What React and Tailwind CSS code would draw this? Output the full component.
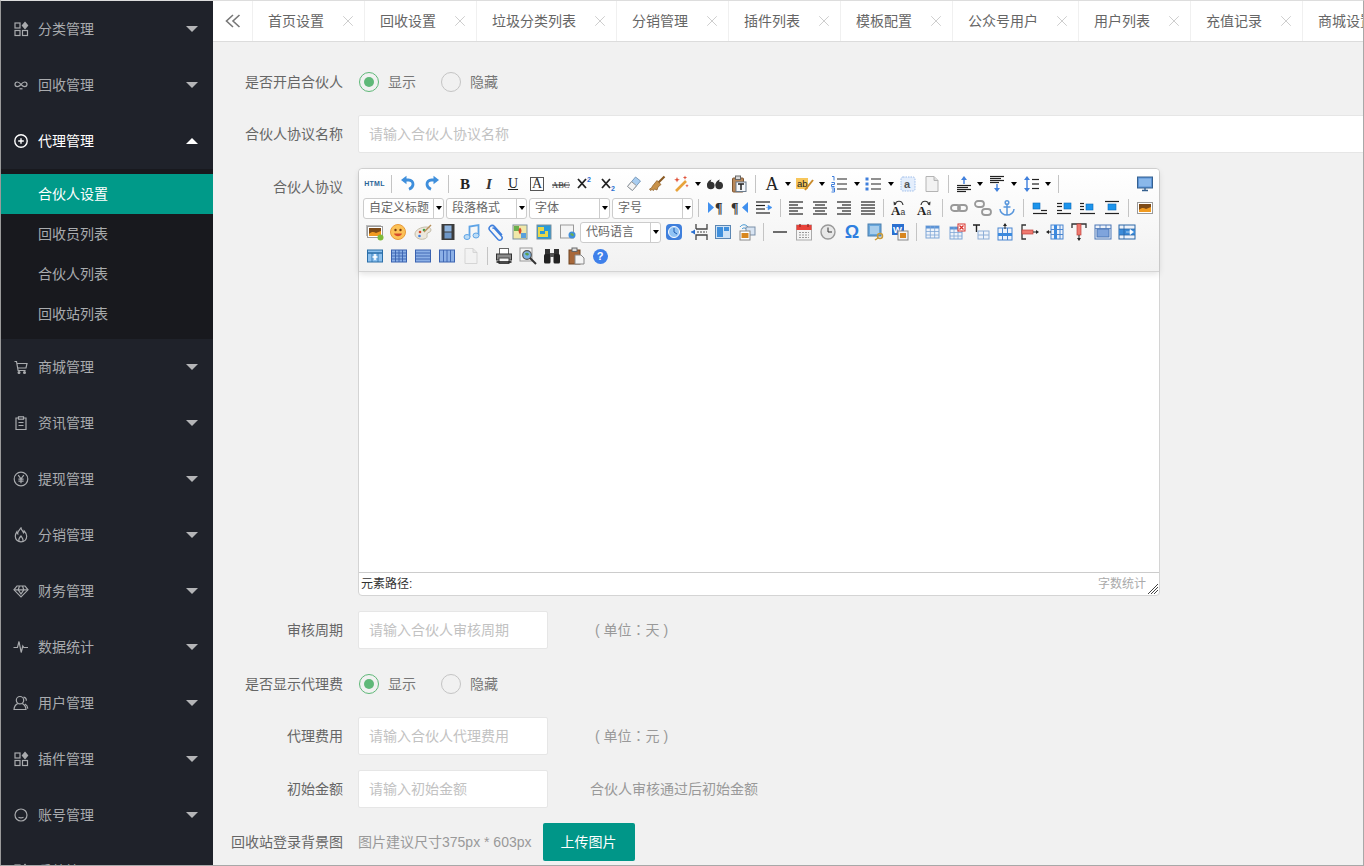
import React from 'react';
import { X } from 'lucide-react';

/* ---------- sidebar icons ---------- */
const Side = ({ children }) => (
  <svg width="16" height="16" viewBox="0 0 16 16" fill="none" stroke="currentColor" strokeWidth="1.2" className="shrink-0">
    {children}
  </svg>
);
const IcoApps = () => (
  <Side>
    <rect x="2" y="2" width="5" height="5" />
    <rect x="2" y="9.500" width="5" height="5" />
    <rect x="9.500" y="9.500" width="5" height="5" />
    <path d="M12 1.500l2.600 3-2.600 3-2.600-3z" fill="currentColor" />
  </Side>
);
const IcoLoop = () => (
  <Side>
    <path d="M8 7.500C6.500 5.500 5.500 5 4.300 5 3 5 2 6 2 7.300s1 2.300 2.300 2.300c1.200 0 2.200-.6 3.700-2.100 1.500 1.500 2.500 2.100 3.700 2.100 1.300 0 2.300-1 2.300-2.300S13 5 11.700 5C10.500 5 9.500 5.500 8 7.500z" />
    <path d="M6.500 11.800h3" />
  </Side>
);
const IcoPlus = () => (
  <Side>
    <circle cx="8" cy="8" r="6.200" strokeWidth="1.400" />
    <path d="M8 5.200v5.600M5.200 8h5.600" strokeWidth="1.400" />
  </Side>
);
const IcoCart = () => (
  <Side>
    <path d="M1.500 2.500h2l1.600 9h7.500" />
    <path d="M4 4.500h10l-1 4.500H5" />
    <circle cx="6" cy="13.500" r=".9" fill="currentColor" />
    <circle cx="11.500" cy="13.500" r=".9" fill="currentColor" />
  </Side>
);
const IcoClip = () => (
  <Side>
    <path d="M5.500 3H3v11.500h10V3h-2.500" />
    <rect x="5.500" y="1.800" width="5" height="2.400" />
    <path d="M5.500 7.500h5M5.500 10.500h5" />
  </Side>
);
const IcoYen = () => (
  <Side>
    <circle cx="8" cy="8" r="6.800" />
    <path d="M5.200 4.200L8 7.800l2.800-3.600M8 7.800v4.500M5.400 8.200h5.200M5.400 10.200h5.200" />
  </Side>
);
const IcoFlame = () => (
  <Side>
    <path d="M8 .8c.6 2.700 2 3.200 2.500 5 .5-.5.700-1.200.7-1.800 1.600 1.600 2.500 3.500 2.500 5.300 0 3.300-2.500 5.500-5.700 5.500s-5.700-2.200-5.700-5.500c0-1.900.6-3.200 1.500-4.500.1 1 .4 1.600.9 2C4.500 4.500 6.200 3 8 .8z" />
    <path d="M6 14c-.8-2.200.5-3.500 2-5 1 1.500 2.500 2.800 2 5" />
  </Side>
);
const IcoGem = () => (
  <Side>
    <path d="M4 3h8l3 3.800L8 14 1 6.800z" />
    <path d="M1.500 6.800h13M5.200 6.800L8 11l2.800-4.200L9.500 3M6.500 3L5.200 6.800" />
  </Side>
);
const IcoPulse = () => (
  <Side>
    <path d="M.5 8.500h4l1.500-6 2.200 11 1.600-6.500 1 1.500h4.200" />
  </Side>
);
const IcoUser = () => (
  <Side>
    <circle cx="7" cy="5.200" r="3.700" />
    <path d="M4.800 8.500C2.800 9.500 1.200 11.500 1 14.500h12c-.2-3-1.800-5-3.800-6" />
    <path d="M10.500 2.200c2 .4 3 2 2.800 3.600M12 9c1.600.8 2.600 2.500 2.800 4.600" />
  </Side>
);
const IcoFace = () => (
  <Side>
    <circle cx="8" cy="8" r="6" />
    <path d="M5.500 10.300c1.500.8 3.500.8 5 0" />
  </Side>
);

const menu = [
  { label: '分类管理', icon: IcoApps },
  { label: '回收管理', icon: IcoLoop },
  { label: '代理管理', icon: IcoPlus, open: true, children: ['合伙人设置', '回收员列表', '合伙人列表', '回收站列表'] },
  { label: '商城管理', icon: IcoCart },
  { label: '资讯管理', icon: IcoClip },
  { label: '提现管理', icon: IcoYen },
  { label: '分销管理', icon: IcoFlame },
  { label: '财务管理', icon: IcoGem },
  { label: '数据统计', icon: IcoPulse },
  { label: '用户管理', icon: IcoUser },
  { label: '插件管理', icon: IcoApps },
  { label: '账号管理', icon: IcoFace },
  { label: '系统管理', icon: IcoApps },
];

const Sidebar = () => (
  <aside className="w-[212px] shrink-0 bg-[#1f222a] overflow-hidden text-sm text-[#a9abae]">
    {menu.map(({ label, icon: Icon, open, children }) => (
      <div key={label}>
        <div className={`h-14 flex items-center pl-[12px] pr-[15px] ${open ? 'text-white' : ''}`}>
          <span className="w-[25px]"><Icon /></span>
          <span className="flex-1">{label}</span>
          {open ? (
            <span className="border-x-[6px] border-b-[6px] border-x-transparent border-b-white" />
          ) : (
            <span className="border-x-[6px] border-t-[6px] border-x-transparent border-t-[#b4b5b7]" />
          )}
        </div>
        {children && (
          <div className="bg-[#18191e] py-[5px]">
            {children.map((c, i) => (
              <div key={c} className={`h-10 flex items-center pl-[37px] ${i === 0 ? 'bg-[#009a89] text-white' : ''}`}>
                {c}
              </div>
            ))}
          </div>
        )}
      </div>
    ))}
  </aside>
);

/* ---------- tabs ---------- */
const tabs = [
  ['首页设置', 'w-[112px]'], ['回收设置', 'w-[112px]'], ['垃圾分类列表', 'w-[140px]'], ['分销管理', 'w-[112px]'],
  ['插件列表', 'w-[112px]'], ['模板配置', 'w-[112px]'], ['公众号用户', 'w-[126px]'], ['用户列表', 'w-[112px]'],
  ['充值记录', 'w-[112px]'], ['商城设置', 'w-[112px]'],
];

const TabBar = () => (
  <div className="h-[41px] shrink-0 flex bg-white border-b border-[#dcdcdc] overflow-hidden text-sm text-[#666]">
    <div className="w-10 shrink-0 flex items-center justify-center border-r border-[#f0f0f0] pl-[1px]">
      <svg width="16" height="14" viewBox="0 0 16 14" fill="none" stroke="#777" strokeWidth="1.600">
        <path d="M8 1L1.500 7 8 13M14.500 1L8 7l6.500 6" />
      </svg>
    </div>
    {tabs.map(([t, w]) => (
      <div key={t} className={`${w} shrink-0 h-full flex items-center pl-[15px] pr-[7px] border-r border-[#f0f0f0]`}>
        <span className="flex-1 whitespace-nowrap">{t}</span>
        <X size={18} strokeWidth={1.2} className="text-[#c8c8c8]" />
      </div>
    ))}
  </div>
);

/* ---------- editor toolbar pieces ---------- */
const C = ({ w = 'w-6', children }) => (
  <div className={`${w} shrink-0 h-6 flex items-center justify-center`}>{children}</div>
);
const Sep = ({ w = 'w-[9px]' }) => (
  <div className={`${w} shrink-0 h-6 flex items-center justify-center`}>
    <div className="w-px h-[18px] bg-[#c4c4c4]" />
  </div>
);
const Tri = () => <span className="border-x-[3px] border-t-[4px] border-x-transparent border-t-black" />;
const Arrow = ({ w = 'w-2' }) => <C w={w}><Tri /></C>;
const Combo = ({ label, split = 'w-[10px]', cls = 'w-[81px]' }) => (
  <div className={`${cls} shrink-0 h-[21px] flex bg-white border border-[#ccc] rounded-[3px] text-xs text-[#666]`}>
    <div className="flex-1 pl-[5px] leading-[19px] whitespace-nowrap overflow-hidden">{label}</div>
    <div className={`${split} border-l border-[#ccc] flex items-center justify-center`}><Tri /></div>
  </div>
);

const S = ({ children }) => (
  <svg width="18" height="18" viewBox="0 0 18 18" fill="none">{children}</svg>
);
const Serif = ({ children, cls }) => (
  <span className={`font-['Liberation_Serif',serif] leading-none ${cls}`}>{children}</span>
);

const UndoPath = () => (
  <>
    <path d="M6 5h3.500c3 0 4.500 2 4.500 4.200 0 2.300-1.500 4-4 5" stroke="#3f8fdc" strokeWidth="2.800" />
    <path d="M7.500 .8v8.400L2 5z" fill="#3f8fdc" />
  </>
);
const Undo = () => <S><UndoPath /></S>;
const Redo = () => (
  <S>
    <g transform="matrix(-1 0 0 1 18 0)"><UndoPath /></g>
  </S>
);
const BoxA = () => (
  <div className="w-[14px] h-[14px] border border-[#555] flex items-center justify-center">
    <Serif cls="text-[14px] text-[#333]">A</Serif>
  </div>
);
const Abc = () => (
  <S>
    <text x="0" y="13" fontFamily="Liberation Serif" fontSize="8.500" fill="#333">ABC</text>
    <path d="M0 10h18" stroke="#222" />
  </S>
);
const XSup = ({ sub }) => (
  <S>
    <path d="M2 4l8 9M10 4l-8 9" stroke="#222" strokeWidth="1.800" />
    <text x="11" y={sub ? 16 : 7} fontFamily="Liberation Sans" fontWeight="700" fontSize="7" fill="#2a6fd0">2</text>
  </S>
);
const Eraser = () => (
  <S>
    <path d="M11.500 2l5 4-8 9.500-5-4z" fill="#a9cdf0" stroke="#7b9cbd" />
    <path d="M3.500 11.500l4-4.800 5 4-4 4.800z" fill="#f4f4f4" stroke="#9a9a9a" />
  </S>
);
const Brush = () => (
  <S>
    <path d="M10 8l6.500-6.500" stroke="#8a5a24" strokeWidth="2.200" />
    <path d="M9 5.500l4 4-3 2.500-1 3-2.500-1-1 1.500-1.500-1-1.500 1-1-1.500 2-1 1-2z" fill="#c8924a" stroke="#8a5a24" strokeWidth=".7" />
  </S>
);
const Wand = () => (
  <S>
    <path d="M4 16L14 6" stroke="#e8a33a" strokeWidth="2.600" />
    <path d="M5 2l.8 2 2 .8-2 .8L5 7.500l-.8-1.900-2-.8 2-.8zM13 .5l.6 1.500 1.500.6-1.500.6-.6 1.500-.6-1.500-1.500-.6 1.500-.6zM15 9l.5 1.200 1.200.5-1.200.5-.5 1.200-.5-1.200-1.200-.5 1.200-.5z" fill="#e0523a" />
  </S>
);
const Quote = () => (
  <S>
    <circle cx="4.800" cy="10.500" r="3.800" fill="#333" />
    <path d="M1 10.500c0-3.500 2-5.500 4.500-6-1 1.500-1 3-.5 4z" fill="#333" />
    <circle cx="13.200" cy="10.500" r="3.800" fill="#333" />
    <path d="M9.400 10.500c0-3.500 2-5.500 4.500-6-1 1.500-1 3-.5 4z" fill="#333" />
  </S>
);
const PasteT = () => (
  <S>
    <rect x="2.500" y="3" width="11" height="14" rx="1" fill="#b9885a" stroke="#7d5530" />
    <rect x="5.500" y="1" width="5" height="3.500" fill="#d8d8d8" stroke="#666" />
    <rect x="6" y="7" width="10" height="9.500" fill="#f4f7fb" stroke="#6a7b8c" />
    <path d="M8 9h6M11 9v6" stroke="#222" strokeWidth="1.500" />
  </S>
);
const BigA = () => <Serif cls="text-[18px] text-[#222]">A</Serif>;
const Hl = () => (
  <S>
    <rect x="0" y="3" width="12" height="11" fill="#f7c65a" />
    <text x="1" y="12" fontFamily="Liberation Sans" fontSize="9.500" fill="#222">ab</text>
    <path d="M9 15L17 5" stroke="#c98a2a" strokeWidth="2" />
  </S>
);
const Ol = () => (
  <S>
    <path d="M7 4h10M7 9h10M7 14h10" stroke="#222" strokeWidth="1.200" />
    <path d="M2 1.500h2v4M1.500 7.500h3v2h-3v2h3M1.500 13h3v4h-3M2 15h2" stroke="#3f7fdc" />
  </S>
);
const Ul = () => (
  <S>
    <path d="M7 4h10M7 9h10M7 14h10" stroke="#222" strokeWidth="1.200" />
    <rect x="1.500" y="2.500" width="3" height="3" fill="#3f7fdc" />
    <rect x="1.500" y="7.500" width="3" height="3" fill="#3f7fdc" />
    <rect x="1.500" y="12.500" width="3" height="3" fill="#3f7fdc" />
  </S>
);
const DashA = () => (
  <S>
    <rect x="2" y="2" width="14" height="14" rx="2" fill="#e4eefc" stroke="#9dbdea" strokeDasharray="1.500 1" />
    <text x="5" y="13" fontFamily="Liberation Sans" fontWeight="700" fontSize="11" fill="#555">a</text>
  </S>
);
const Doc = ({ op }) => (
  <S>
    <path d="M3 1.500h8l4 4v11H3z" fill="#f2f2f2" stroke="#b4b4b4" opacity={op} />
    <path d="M11 1.500v4h4" fill="#ddd" stroke="#b4b4b4" opacity={op} />
  </S>
);
const Lines = ({ rows, stroke = '#222' }) => (
  <g stroke={stroke} strokeWidth="1.200">
    {rows.map(([y, a, b]) => <path key={y} d={`M${a} ${y}H${b}`} />)}
  </g>
);
const RowTop = () => (
  <S>
    <path d="M9 1l3 4H6z M8.300 5h1.400v4H8.300z" fill="#3f7fdc" />
    <Lines rows={[[10.500, 2, 16], [12.500, 2, 13], [14.500, 2, 16], [16.500, 2, 11]]} />
  </S>
);
const RowBot = () => (
  <S>
    <Lines rows={[[1.500, 2, 16], [3.500, 2, 13], [5.500, 2, 16], [7.500, 2, 11]]} />
    <path d="M9 17l3-4H6z M8.300 9h1.400v4H8.300z" fill="#3f7fdc" />
  </S>
);
const LineH = () => (
  <S>
    <path d="M5 1l3 4H2zM5 17l3-4H2zM4.300 5h1.400v8H4.300z" fill="#3f7fdc" />
    <Lines rows={[[4.500, 10, 17], [9, 10, 17], [13.500, 10, 17]]} />
  </S>
);
const Monitor = () => (
  <S>
    <rect x="1.500" y="2" width="15" height="11" fill="#5b93d6" stroke="#35608f" />
    <rect x="3" y="3.500" width="12" height="8" fill="#8ab8ea" />
    <path d="M6 15.500h6M9 13v2.500" stroke="#35608f" strokeWidth="1.400" />
  </S>
);
const Ltr = ({ rev }) => (
  <S>
    <g transform={rev ? 'matrix(-1 0 0 1 18 0)' : undefined}>
      <path d="M1 3v11l6-5.500z" fill="#3f8fee" />
    </g>
    <text x={rev ? 0 : 8} y="14" fontFamily="Liberation Serif" fontWeight="700" fontSize="14" fill="#333">¶</text>
  </S>
);
const Indent = () => (
  <S>
    <Lines rows={[[3, 1, 15], [6.500, 1, 10], [10, 1, 10], [14, 1, 15]]} />
    <path d="M11 8.500h3M13 6l4 2.500-4 2.500z" fill="#3f8fee" stroke="#3f8fee" strokeWidth=".5" />
  </S>
);
const Align = ({ kind }) => {
  const r = {
    l: [[3, 2, 16], [6, 2, 11], [9, 2, 16], [12, 2, 11], [15, 2, 16]],
    c: [[3, 2, 16], [6, 4, 14], [9, 2, 16], [12, 4, 14], [15, 2, 16]],
    r: [[3, 2, 16], [6, 7, 16], [9, 2, 16], [12, 7, 16], [15, 2, 16]],
    j: [[3, 2, 16], [6, 2, 16], [9, 2, 16], [12, 2, 16], [15, 2, 16]],
  }[kind];
  return <S><Lines rows={r} /></S>;
};
const AaCase = ({ flip }) => (
  <S>
    <text x="1" y="16" fontFamily="Liberation Serif" fontWeight="700" fontSize="13" fill="#222">A</text>
    <text x="10.500" y="15.500" fontFamily="Liberation Sans" fontSize="8.500" fill="#333">a</text>
    <path d="M5 6c1-5 7-5 8 0" stroke="#333" strokeWidth="1.200" />
    <path d={flip ? 'M14.500 2.500l-.4 4-2.800-2z' : 'M3.500 2.500l.4 4 2.800-2z'} fill="#333" />
  </S>
);
const Link = () => (
  <S>
    <rect x="1" y="6" width="9" height="6" rx="3" stroke="#999" strokeWidth="1.800" />
    <rect x="8" y="6" width="9" height="6" rx="3" stroke="#999" strokeWidth="1.800" />
  </S>
);
const Unlink = () => (
  <S>
    <rect x="1" y="2" width="9" height="6" rx="3" stroke="#999" strokeWidth="1.800" />
    <rect x="8" y="10" width="9" height="6" rx="3" stroke="#999" strokeWidth="1.800" />
  </S>
);
const Anchor = () => (
  <S>
    <circle cx="9" cy="3.500" r="1.800" stroke="#5a97dc" strokeWidth="1.500" />
    <path d="M9 5.500V16M5.500 8h7M2 10c0 3.500 3.500 6 7 6s7-2.500 7-6" stroke="#5a97dc" strokeWidth="1.500" />
  </S>
);
const Blue = ({ x, y, w = 7, h = 6 }) => <rect x={x} y={y} width={w} height={h} fill="#1c94ec" stroke="#0a6ab8" strokeWidth=".6" />;
const ImgLeft = () => (
  <S><Blue x={2} y={4} /><Lines rows={[[11.500, 10, 16], [14.500, 2, 16]]} /></S>
);
const ImgRight = () => (
  <S><Blue x={9} y={4} /><Lines rows={[[4.500, 2, 7], [7.500, 2, 7], [11.500, 2, 7], [14.500, 2, 16]]} /></S>
);
const ImgNone = () => (
  <S><Blue x={7} y={5} /><Lines rows={[[4.500, 1, 5], [7.500, 1, 5], [10.500, 1, 5], [14.500, 1, 16]]} /></S>
);
const ImgCenter = () => (
  <S><Blue x={5} y={5} w={8} /><Lines rows={[[2.500, 2, 16], [14.500, 2, 16]]} /></S>
);
const Photo = ({ add }) => (
  <S>
    {add && <rect x="0" y="2" width="15" height="11" fill="#bbb" />}
    <rect x="1.500" y="3.500" width="15" height="11" fill="#fff" stroke="#9a9a9a" />
    <rect x="3" y="5" width="12" height="8" fill="#7d4a16" />
    <path d="M3 11c3-3 5-2 7-1l5-2v5H3z" fill="#f09a20" />
    {add && <circle cx="14.500" cy="14.500" r="3" fill="#7dbb3a" />}
  </S>
);
const Smile = () => (
  <S>
    <circle cx="9" cy="9" r="7.500" fill="#fcc257" stroke="#e89a3a" />
    <circle cx="6.500" cy="7" r="1.200" fill="#7a3c10" />
    <circle cx="11.500" cy="7" r="1.200" fill="#7a3c10" />
    <path d="M5 10.500c1 3.500 7 3.500 8 0z" fill="#d64a2a" />
  </S>
);
const Palette = () => (
  <S>
    <path d="M1 11c0-4 6-7 11-7 3 0 5 1 5 3 0 3-4 2-4 4s1 4-3 5-9-1-9-5z" fill="#ece7dc" stroke="#c4bda9" />
    <circle cx="6" cy="9" r="1.300" fill="#d64a2a" />
    <circle cx="10" cy="7" r="1.300" fill="#3fa04a" />
    <circle cx="5.500" cy="13" r="1.300" fill="#3f7fdc" />
    <path d="M10 9l7-7" stroke="#b8905a" strokeWidth="1.500" />
  </S>
);
const Film = () => (
  <S>
    <rect x="2.500" y="1" width="13" height="16" fill="#3c3c3c" />
    <rect x="5.500" y="2.500" width="7" height="6" fill="#8fb4de" />
    <rect x="5.500" y="9.500" width="7" height="6" fill="#6e97c8" />
  </S>
);
const Music = () => (
  <S>
    <path d="M6.500 14V3.500l9-1.500v10.500" stroke="#5fa4e6" strokeWidth="1.800" />
    <ellipse cx="4" cy="14" rx="3" ry="2.500" fill="#bcdcf6" stroke="#5fa4e6" />
    <ellipse cx="13" cy="12.500" rx="3" ry="2.500" fill="#bcdcf6" stroke="#5fa4e6" />
  </S>
);
const Clip = () => (
  <S>
    <path d="M15 12L7.500 3.500C6 2 4 2.500 3 3.500s-1.500 2.500 0 4l8 9c1 1 2.500 1 3.500 0s1-2.300 0-3.300L7.500 5.500c-.6-.6-1.500-.5-2 0" stroke="#3f7fdc" strokeWidth="1.500" />
  </S>
);
const MapI = () => (
  <S>
    <rect x="2" y="2" width="14" height="14" fill="#f0e8a8" stroke="#7b8f9c" />
    <path d="M3 3h5v5H3z" fill="#6ab04c" />
    <path d="M10 10h5v5h-5z" fill="#5aa0dc" />
    <path d="M9 4.500c-2 2-2 4 0 7 2-3 2-5 0-7z" fill="#d64a2a" />
  </S>
);
const GMap = () => (
  <S>
    <rect x="2" y="2" width="14" height="14" fill="#2a9ad8" stroke="#7b8f9c" />
    <path d="M3 4h6v4H5v3h5V8h3v6H3z" fill="#e8d84a" />
  </S>
);
const Frame = () => (
  <S>
    <rect x="1.500" y="2" width="13" height="13" fill="#f4f4f4" stroke="#999" />
    <circle cx="13" cy="12" r="3.500" fill="#3f8fdc" />
    <path d="M11 11c1-1 3-1 4 1-1 2-2 1-4-1z" fill="#6ab04c" />
  </S>
);
const Webapp = () => (
  <S>
    <rect x="1" y="1" width="16" height="16" rx="4" fill="#3f7fdc" />
    <circle cx="9" cy="9" r="5.500" fill="#8fc2f4" stroke="#fff" />
    <path d="M9 5v4l3 2" stroke="#1c5ab0" />
  </S>
);
const PageBreak = () => (
  <S>
    <path d="M6 6V1M17 1v5H6M6 17v-5h11v5" stroke="#444" strokeWidth="1.300" />
    <path d="M5 9H1" stroke="#3f7fdc" />
    <path d="M1 9l4-2.500v5z" fill="#2a6fd0" />
    <path d="M7 9h10" stroke="#444" strokeDasharray="2 1" />
  </S>
);
const Tpl = () => (
  <S>
    <rect x="1.500" y="2.500" width="15" height="13" fill="#cfe2f5" stroke="#5b86b2" />
    <rect x="3" y="4" width="6" height="10" fill="#3f8fdc" />
    <rect x="10" y="4" width="5" height="4" fill="#3f8fdc" />
  </S>
);
const Bg = () => (
  <S>
    <path d="M2 4c2-3 6-3 8 0M4 6c1-1.500 3-1.500 4 0" stroke="#4a9ad4" />
    <rect x="8" y="4" width="9" height="8" fill="#d8e4f2" stroke="#7a8fa8" />
    <rect x="2" y="8" width="10" height="9" fill="#fff" stroke="#888" />
    <rect x="3.500" y="10" width="7" height="5" fill="#d8861e" />
  </S>
);
const Hr = () => <S><path d="M2 9h14" stroke="#111" strokeWidth="1.200" /></S>;
const Cal = () => (
  <S>
    <rect x="1.500" y="2" width="15" height="15" fill="#f4f4f4" stroke="#aaa" />
    <rect x="1.500" y="2" width="15" height="5" fill="#e8423a" />
    <path d="M5 1v3M13 1v3" stroke="#a02a24" strokeWidth="1.400" />
    <path d="M4 9.500h10M4 12h10M4 14.500h10" stroke="#999" strokeDasharray="2 1" />
  </S>
);
const Clock = () => (
  <S>
    <circle cx="9" cy="9" r="7" fill="#e8e8e8" stroke="#999" strokeWidth="1.400" />
    <path d="M9 4.500V9h4" stroke="#333" />
  </S>
);
const Omega = () => (
  <span className="font-['Liberation_Sans',sans-serif] text-[18px] font-bold leading-none text-[#2f7fe0]">Ω</span>
);
const KeyImg = () => (
  <S>
    <rect x="1" y="1" width="13" height="12" fill="#6aa8dc" stroke="#4a7fae" />
    <rect x="3" y="3" width="9" height="8" fill="#a8cdec" />
    <circle cx="13" cy="13" r="2.500" stroke="#c89a3a" strokeWidth="1.500" />
    <path d="M11 15l-3 2" stroke="#c89a3a" strokeWidth="1.500" />
  </S>
);
const Word = () => (
  <S>
    <rect x="1" y="1" width="12" height="11" fill="#2a6fd0" />
    <text x="2" y="10" fontFamily="Liberation Sans" fontWeight="700" fontSize="9.500" fill="#fff">W</text>
    <rect x="7" y="8" width="10" height="9" fill="#f4f4f4" stroke="#888" />
    <rect x="9" y="10" width="6" height="5" fill="#d8861e" />
  </S>
);
const Grid = ({ children, head = '#5b93d6', x = 2, y = 3, w = 13, h = 12 }) => (
  <S>
    <rect x={x} y={y} width={w} height={h} fill="#eef3fa" stroke="#7ea6d6" />
    <rect x={x} y={y} width={w} height="2.500" fill={head} />
    <path d={`M${x} ${y + 5.500}h${w}M${x} ${y + 9}h${w}M${x + w / 3} ${y}v${h}M${x + (2 * w) / 3} ${y}v${h}`} stroke="#7ea6d6" strokeWidth=".8" />
    {children}
  </S>
);
const DelTable = () => (
  <Grid w={12} y={4}>
    <rect x="10" y="1" width="7" height="7" fill="#fff" stroke="#d8302a" />
    <path d="M11.500 2.500l4 4M15.500 2.500l-4 4" stroke="#d8302a" strokeWidth="1.300" />
  </Grid>
);
const Caption = () => (
  <S>
    <path d="M1 2h7M4.500 2v7" stroke="#222" strokeWidth="1.400" />
    <rect x="6" y="8" width="11" height="8" fill="#eef3fa" stroke="#8eaed6" />
    <path d="M6 12h11M11.500 8v8" stroke="#8eaed6" />
  </S>
);
const InsRow = () => (
  <S>
    <rect x="2" y="5" width="14" height="12" fill="#eef3fa" stroke="#4a86d0" />
    <rect x="2" y="10" width="14" height="3" fill="#3a8ae0" />
    <path d="M6.500 5v12M11.500 5v12" stroke="#4a86d0" />
    <path d="M9 0l2 3H7zM8.500 3h1v3h-1z" fill="#222" />
  </S>
);
const DelRow = () => (
  <S>
    <path d="M5 2H1v14h4" stroke="#333" strokeWidth="1.300" />
    <rect x="1" y="7" width="11" height="4" fill="#ee7a70" stroke="#c0403a" strokeWidth=".7" />
    <path d="M12 9h4" stroke="#222" />
    <path d="M18 9l-3-2v4z" fill="#222" />
  </S>
);
const InsCol = () => (
  <S>
    <rect x="5" y="2" width="12" height="14" fill="#eef3fa" stroke="#4a86d0" />
    <rect x="8" y="2" width="3" height="14" fill="#3a8ae0" />
    <path d="M5 6.500h12M5 11.500h12M14 2v14" stroke="#4a86d0" />
    <path d="M0 9l3-2v4zM3 8.500h2v1H3z" fill="#222" />
  </S>
);
const DelCol = () => (
  <S>
    <path d="M2 5V1h14v4" stroke="#333" strokeWidth="1.300" />
    <rect x="7" y="1" width="4" height="11" fill="#ee7a70" stroke="#c0403a" strokeWidth=".7" />
    <path d="M9 12v3" stroke="#222" />
    <path d="M9 18l-2-3h4z" fill="#222" />
  </S>
);
const Merge = () => (
  <S>
    <rect x="1" y="2" width="16" height="14" fill="#eef3fa" stroke="#4a76b6" />
    <rect x="3" y="6" width="12" height="8" fill="#7fa4dc" stroke="#4a76b6" />
    <path d="M1 5.500h16M6 2v3.500M12 2v3.500" stroke="#4a76b6" strokeWidth=".8" />
  </S>
);
const Split = () => (
  <S>
    <rect x="1" y="2" width="16" height="14" fill="#eef3fa" stroke="#2a66a6" />
    <rect x="1" y="6" width="16" height="6" fill="#3a8ad8" />
    <path d="M1 6h16M1 12h16M6 2v14" stroke="#2a66a6" strokeWidth=".8" />
    <path d="M8 9h5M12 6.500l3.500 2.500-3.500 2.500z" fill="#fff" stroke="#fff" strokeWidth=".6" />
  </S>
);
const TblA = () => (
  <S>
    <rect x="1.500" y="3" width="15" height="12" fill="#8cc0ee" stroke="#2a6ea8" />
    <path d="M1.500 6h15" stroke="#2a6ea8" strokeWidth="1.500" />
    <path d="M6 6v9M12 6v9" stroke="#2a6ea8" strokeWidth=".8" />
    <path d="M9 7v6M6.500 10h5" stroke="#fff" strokeWidth="1.600" />
  </S>
);
const TblB = ({ rows, cols }) => (
  <S>
    <rect x="1.500" y="3" width="15" height="12" fill="#8cb0e6" stroke="#3a62b0" />
    {rows && <path d="M1.500 6h15M1.500 9h15M1.500 12h15" stroke="#3a62b0" strokeWidth=".9" />}
    {cols && <path d="M5.500 3v12M9 3v12M12.500 3v12" stroke="#3a62b0" strokeWidth=".9" />}
  </S>
);
const Printer = () => (
  <S>
    <rect x="4.500" y="1.500" width="9" height="6" fill="#fff" stroke="#666" />
    <rect x="1.500" y="7" width="15" height="6" fill="#8a8a8a" stroke="#333" />
    <rect x="4" y="11" width="10" height="5.500" fill="#f4f4f4" stroke="#444" />
    <path d="M1.500 15h15" stroke="#111" strokeWidth="1.500" />
  </S>
);
const Preview = () => (
  <S>
    <rect x="1" y="1" width="12" height="13" fill="#f4f4f4" stroke="#999" />
    <circle cx="8" cy="8" r="4.300" fill="#7ab4e6" stroke="#555" strokeWidth="1.200" />
    <path d="M6 7c1-2 3-1 4 0-1 2-2 2-4 0z" fill="#5aa04a" />
    <path d="M11 11l6 6" stroke="#333" strokeWidth="2" />
  </S>
);
const Binoc = () => (
  <S>
    <rect x="2" y="2" width="5" height="6" fill="#333" />
    <rect x="11" y="2" width="5" height="6" fill="#333" />
    <rect x="1" y="7" width="6.500" height="9.500" rx="1.500" fill="#222" />
    <rect x="10.500" y="7" width="6.500" height="9.500" rx="1.500" fill="#222" />
    <rect x="7" y="6" width="4" height="4" fill="#555" />
  </S>
);
const PasteB = () => (
  <S>
    <rect x="2" y="3" width="11" height="14" fill="#a8683a" stroke="#6e4422" />
    <rect x="5" y="1" width="5" height="3.500" fill="#ddd" stroke="#666" />
    <path d="M8 8h6l3 3v6H8z" fill="#f4f4f4" stroke="#888" />
  </S>
);
const Help = () => (
  <div className="w-[15px] h-[15px] rounded-full bg-[#3f80ea] text-white text-[11px] font-bold flex items-center justify-center leading-none">?</div>
);

const Toolbar = () => (
  <div className="h-[103px] shrink-0 bg-gradient-to-b from-white to-[#f1f1f1] border-b border-[#d4d4d4] rounded-t-[4px] pt-[3px] pl-[4px] pr-[2px] shadow-[0_2px_6px_rgba(0,0,0,0.12)] relative">
    {/* row 1 */}
    <div className="flex h-6">
      <C w="w-[23px]"><span className="text-[7px] font-bold tracking-[0.3px] text-[#2a6496]">HTML</span></C>
      <Sep w="w-[10px]" />
      <C><Undo /></C><C><Redo /></C>
      <Sep />
      <C><Serif cls="text-[15px] font-bold text-[#222]">B</Serif></C>
      <C><Serif cls="text-[15px] italic font-bold text-[#333]">I</Serif></C>
      <C><Serif cls="text-[14px] underline text-[#222]">U</Serif></C>
      <C><BoxA /></C><C><Abc /></C><C><XSup /></C><C><XSup sub /></C>
      <C><Eraser /></C><C><Brush /></C><C><Wand /></C><Arrow w="w-[10px]" />
      <C><Quote /></C><C><PasteT /></C>
      <Sep />
      <C><BigA /></C><Arrow />
      <C w="w-[26px]"><Hl /></C><Arrow />
      <C w="w-[26px]"><Ol /></C><Arrow w="w-[9px]" />
      <C><Ul /></C><Arrow w="w-[11px]" />
      <C><DashA /></C><C><Doc /></C>
      <Sep w="w-2" />
      <C><RowTop /></C><Arrow />
      <C w="w-[26px]"><RowBot /></C><Arrow />
      <C w="w-[26px]"><LineH /></C><Arrow />
      <Sep w="w-[12px]" />
      <div className="flex-1" />
      <C><Monitor /></C>
    </div>
    {/* row 2 */}
    <div className="flex h-6 items-center">
      <Combo label="自定义标题" />
      <div className="w-[2px]" /><Combo label="段落格式" />
      <div className="w-[2px]" /><Combo label="字体" />
      <div className="w-[2px]" /><Combo label="字号" />
      <Sep w="w-[11px]" />
      <C><Ltr /></C><C><Ltr rev /></C><C><Indent /></C>
      <Sep w="w-2" />
      <C><Align kind="l" /></C><C><Align kind="c" /></C><C><Align kind="r" /></C><C><Align kind="j" /></C>
      <Sep w="w-[7px]" />
      <C><AaCase /></C><C w="w-[27px]"><AaCase flip /></C>
      <Sep />
      <C><Link /></C><C><Unlink /></C><C><Anchor /></C>
      <Sep />
      <C><ImgLeft /></C><C><ImgRight /></C><C><ImgNone /></C><C><ImgCenter /></C>
      <Sep />
      <C><Photo /></C>
    </div>
    {/* row 3 */}
    <div className="flex h-6 items-center">
      <C w="w-[23px]"><Photo add /></C><C><Smile /></C><C w="w-[26px]"><Palette /></C>
      <C><Film /></C><C><Music /></C><C><Clip /></C><C><MapI /></C><C><GMap /></C><C><Frame /></C>
      <Combo label="代码语言" />
      <C w="w-[26px]"><Webapp /></C><C><PageBreak /></C><C><Tpl /></C><C><Bg /></C>
      <Sep />
      <C><Hr /></C><C><Cal /></C><C><Clock /></C><C><Omega /></C><C><KeyImg /></C><C><Word /></C>
      <Sep />
      <C><Grid /></C><C><DelTable /></C><C><Caption /></C><C><InsRow /></C>
      <C w="w-[26px]"><DelRow /></C><C><InsCol /></C><C><DelCol /></C><C><Merge /></C><C><Split /></C>
    </div>
    {/* row 4 */}
    <div className="flex h-6 items-center">
      <C><TblA /></C><C><TblB rows cols /></C><C><TblB rows /></C><C><TblB cols /></C>
      <C><Doc op=".45" /></C>
      <Sep />
      <C><Printer /></C><C><Preview /></C><C><Binoc /></C><C><PasteB /></C><C><Help /></C>
    </div>
  </div>
);

const Editor = () => (
  <div className="w-[802px] h-[428px] flex flex-col bg-white border border-[#d4d4d4] rounded-[4px]">
    <Toolbar />
    <div className="flex-1" />
    <div className="h-[23px] shrink-0 flex items-center border-t border-[#ccc] text-xs">
      <span className="pl-[2px] flex-1 text-[#333]">元素路径:</span>
      <span className="text-[#aaa] pr-[1px]">字数统计</span>
      <svg width="12" height="12" viewBox="0 0 12 12" className="self-end">
        <path d="M1 11L11 1M4 11l7-7M7 11l4-4" stroke="#444" strokeWidth="1" />
      </svg>
    </div>
  </div>
);

/* ---------- form ---------- */
const Label = ({ children }) => (
  <div className="w-[130px] pr-0 mr-[15px] text-right shrink-0 whitespace-nowrap">{children}</div>
);
const Radio = ({ on, label }) => (
  <div className="flex items-center ml-[1px] mr-[24px]">
    {on ? (
      <span className="w-5 h-5 rounded-full border-[1.5px] border-[#5fb878] flex items-center justify-center mr-[9px]">
        <span className="w-[10px] h-[10px] rounded-full bg-[#5fb878]" />
      </span>
    ) : (
      <span className="w-5 h-5 rounded-full border-[1.5px] border-[#c4c4c4] mr-[9px]" />
    )}
    <span className="text-[#777]">{label}</span>
  </div>
);
const RadioRow = ({ label, cls }) => (
  <div className={`${cls} flex items-center`}>
    <Label>{label}</Label>
    <Radio on label="显示" />
    <Radio label="隐藏" />
  </div>
);
const Input = ({ placeholder, cls = 'w-[190px]' }) => (
  <input
    placeholder={placeholder}
    className={`${cls} h-[38px] shrink-0 bg-white border border-[#e6e6e6] rounded-[2px] pl-[10px] outline-none text-sm placeholder:text-[#c2c2c2]`}
  />
);
const ShortRow = ({ label, placeholder, note, punct }) => (
  <div className="flex items-center h-[38px]">
    <Label>{label}</Label>
    <Input placeholder={placeholder} />
    <span className={`text-[#999] whitespace-nowrap ${punct ? "ml-[47px] font-['Liberation_Sans','Noto_Sans_CJK_TC',sans-serif]" : 'ml-[42px]'}`}>{note}</span>
  </div>
);

export default function App() {
  return (
    <div className="w-[1364px] h-[866px] flex overflow-hidden border-l border-r border-b border-t border-l-[#9a9a9a] border-r-[#a8a8a8] border-b-[#a8a8a8] border-t-[#dddddd] bg-[#f1f1f1] font-['Liberation_Sans','Noto_Sans_CJK_SC',sans-serif] text-sm text-[#666]">
      <Sidebar />
      <div className="flex-1 min-w-0 flex flex-col overflow-hidden">
        <TabBar />
        <main className="flex-1 overflow-hidden pt-[21px] pl-0 flex flex-col gap-[15px]">
          <RadioRow label="是否开启合伙人" cls="h-[37px] pt-[1px]" />
          <div className="flex items-center h-[38px]">
            <Label>合伙人协议名称</Label>
            <Input placeholder="请输入合伙人协议名称" cls="w-[1010px]" />
          </div>
          <div className="flex items-start">
            <div className="pt-[9px]"><Label>合伙人协议</Label></div>
            <Editor />
          </div>
          <ShortRow label="审核周期" placeholder="请输入合伙人审核周期" note="( 单位：天 )" punct />
          <RadioRow label="是否显示代理费" cls="h-[38px] pt-[2px]" />
          <ShortRow label="代理费用" placeholder="请输入合伙人代理费用" note="( 单位：元 )" punct />
          <ShortRow label="初始金额" placeholder="请输入初始金额" note="合伙人审核通过后初始金额" />
          <div className="flex items-center h-[38px]">
            <Label>回收站登录背景图</Label>
            <span className="text-[#999] whitespace-nowrap">图片建议尺寸375px * 603px</span>
            <button className="ml-[11px] w-[92px] h-[38px] rounded-[2px] bg-[#009688] text-white">上传图片</button>
          </div>
        </main>
      </div>
    </div>
  );
}
